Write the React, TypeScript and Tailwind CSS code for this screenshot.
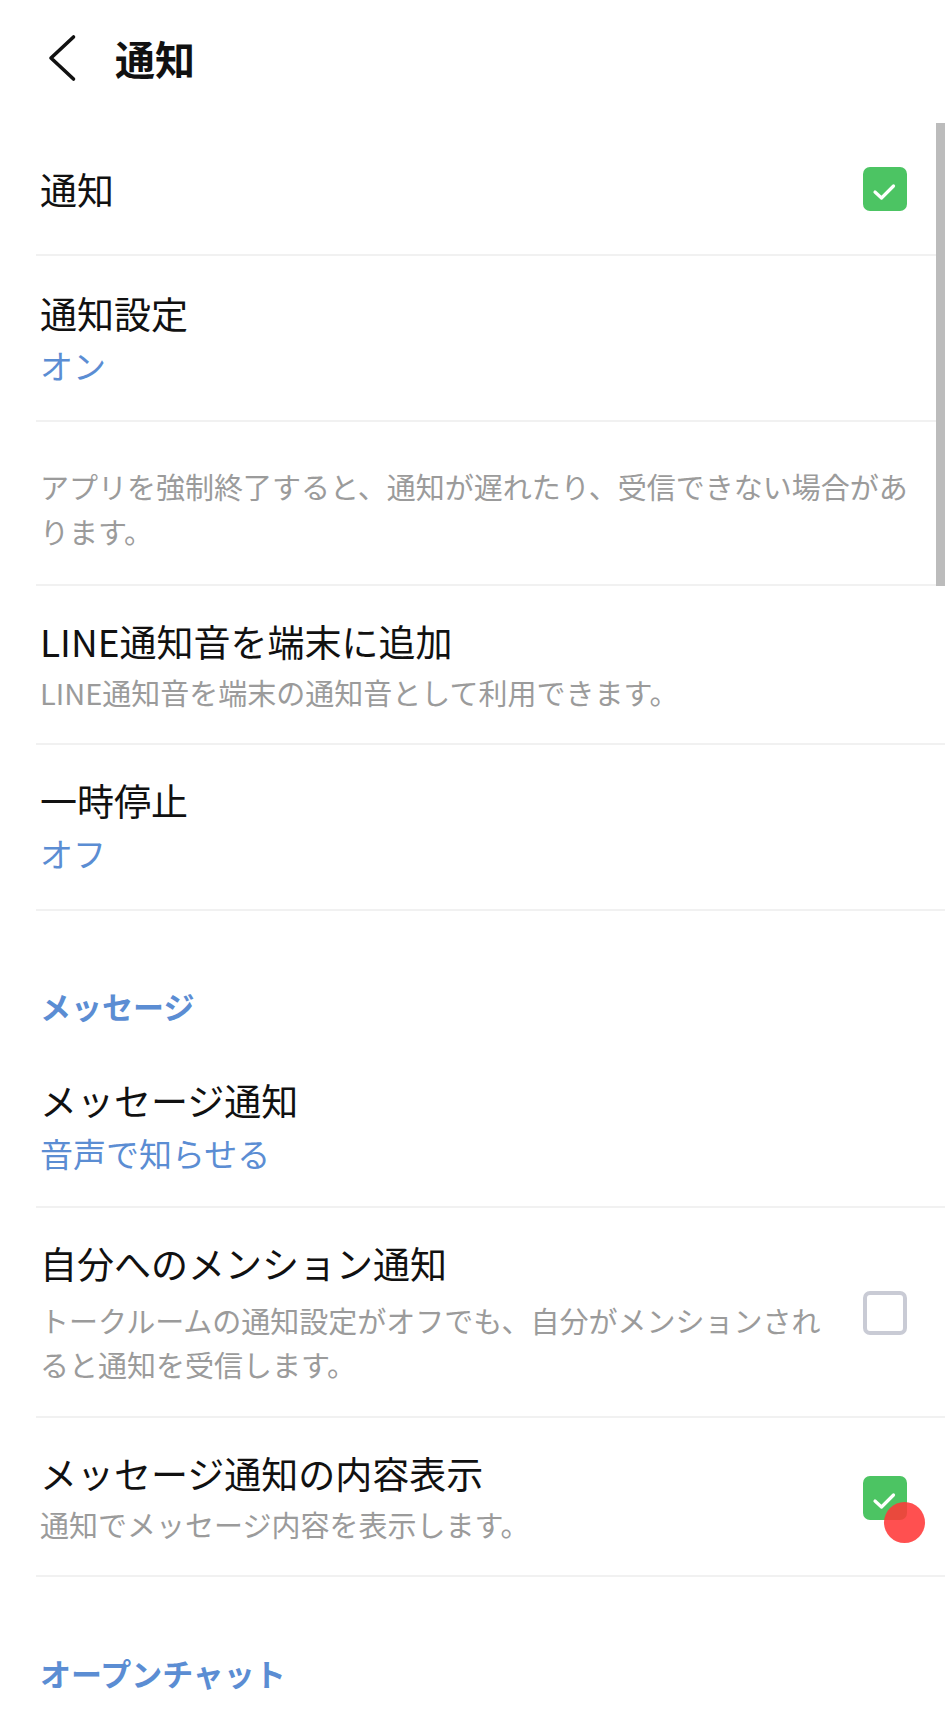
import React from "react";

const FONT = { fontFamily: '"Noto Sans CJK JP", "Noto Sans", sans-serif' };

function Checked() {
  return (
    <div className="w-[44px] h-[44px] rounded-[7px] bg-[#4cc463] flex items-center justify-center shrink-0">
      <svg width="44" height="44" viewBox="0 0 44 44">
        <path d="M12 25 L18.5 31 L30.5 19" fill="none" stroke="#ffffff" strokeWidth="3.2" strokeLinecap="round" strokeLinejoin="round" />
      </svg>
    </div>
  );
}

function Unchecked() {
  return <div className="w-[44px] h-[44px] rounded-[7px] border-[4px] border-[#c9cbd5] bg-white shrink-0" />;
}

export default function App() {
  return (
    <div className="relative min-h-screen w-full bg-white text-[#111111]" style={FONT}>
      {/* scrollbar */}
      <div className="absolute right-0 top-[123px] w-[9px] h-[463px] bg-[#bcbcbc]" />

      {/* header */}
      <div className="h-[123px] flex items-start pt-[34px]">
        <svg className="ml-[47px]" width="32" height="48" viewBox="0 0 32 48">
          <path d="M26.5 3 L4 24 L26.5 45" fill="none" stroke="#111111" strokeWidth="3.6" strokeLinecap="round" strokeLinejoin="round" />
        </svg>
        <div className="ml-[36px] text-[40px] leading-[48px] font-bold">通知</div>
      </div>

      {/* row: 通知 */}
      <div className="ml-[36px] pl-[4px] pr-[38px] h-[133px] flex items-center justify-between border-b-2 border-[#f1f1f1]">
        <div className="text-[37px] leading-[48px]">通知</div>
        <Checked />
      </div>

      {/* row: 通知設定 */}
      <div className="ml-[36px] pl-[4px] pt-[33px] pb-[33px] border-b-2 border-[#f1f1f1]">
        <div className="text-[37px] leading-[48px]">通知設定</div>
        <div className="mt-[6px] text-[33px] leading-[44px] text-[#5b8dd3]">オン</div>
      </div>

      {/* note */}
      <div className="ml-[36px] pl-[4px] pr-[20px] pt-[42px] pb-[30px] border-b-2 border-[#f1f1f1]">
        <div className="text-[29px] leading-[45px] text-[#9b9b9b]">
          アプリを強制終了すると、通知が遅れたり、受信できない場合があります。
        </div>
      </div>

      {/* LINE通知音 */}
      <div className="ml-[36px] pl-[4px] pt-[31px] pb-[31px] border-b-2 border-[#f1f1f1]">
        <div className="text-[37px] leading-[48px]">LINE通知音を端末に追加</div>
        <div className="mt-[7px] text-[29px] leading-[40px] text-[#9b9b9b]">LINE通知音を端末の通知音として利用できます。</div>
      </div>

      {/* 一時停止 */}
      <div className="ml-[36px] pl-[4px] pt-[31px] pb-[34px] border-b-2 border-[#f1f1f1]">
        <div className="text-[37px] leading-[48px]">一時停止</div>
        <div className="mt-[7px] text-[33px] leading-[44px] text-[#5b8dd3]">オフ</div>
      </div>

      {/* section: メッセージ */}
      <div className="ml-[36px] pl-[4px] pt-[73px]">
        <div className="text-[31px] leading-[44px] font-bold text-[#5b8dd3]">メッセージ</div>
      </div>

      {/* メッセージ通知 */}
      <div className="ml-[36px] pl-[4px] pt-[48px] pb-[31px] border-b-2 border-[#f1f1f1]">
        <div className="text-[37px] leading-[48px]">メッセージ通知</div>
        <div className="mt-[7px] text-[33px] leading-[44px] text-[#5b8dd3]">音声で知らせる</div>
      </div>

      {/* 自分へのメンション通知 */}
      <div className="ml-[36px] pl-[4px] pr-[38px] pt-[31px] pb-[30px] flex items-center border-b-2 border-[#f1f1f1]">
        <div className="flex-1 min-w-0">
          <div className="text-[37px] leading-[48px]">自分へのメンション通知</div>
          <div className="mt-[11px] text-[29px] leading-[44px] text-[#9b9b9b]">
            トークルームの通知設定がオフでも、自分がメンションされると通知を受信します。
          </div>
        </div>
        <div className="ml-[32px]">
          <Unchecked />
        </div>
      </div>

      {/* メッセージ通知の内容表示 */}
      <div className="ml-[36px] pl-[4px] pr-[38px] pt-[31px] pb-[29px] flex items-center border-b-2 border-[#f1f1f1]">
        <div className="flex-1 min-w-0">
          <div className="text-[37px] leading-[48px]">メッセージ通知の内容表示</div>
          <div className="mt-[5px] text-[29px] leading-[44px] text-[#9b9b9b]">通知でメッセージ内容を表示します。</div>
        </div>
        <div className="ml-[32px] relative">
          <Checked />
          <div className="absolute left-[21px] top-[26px] w-[41px] h-[41px] rounded-full bg-[rgba(255,56,56,0.88)]" />
        </div>
      </div>

      {/* section: オープンチャット */}
      <div className="ml-[36px] pl-[4px] pt-[74px]">
        <div className="text-[31px] leading-[44px] font-bold text-[#5b8dd3]">オープンチャット</div>
      </div>
    </div>
  );
}
